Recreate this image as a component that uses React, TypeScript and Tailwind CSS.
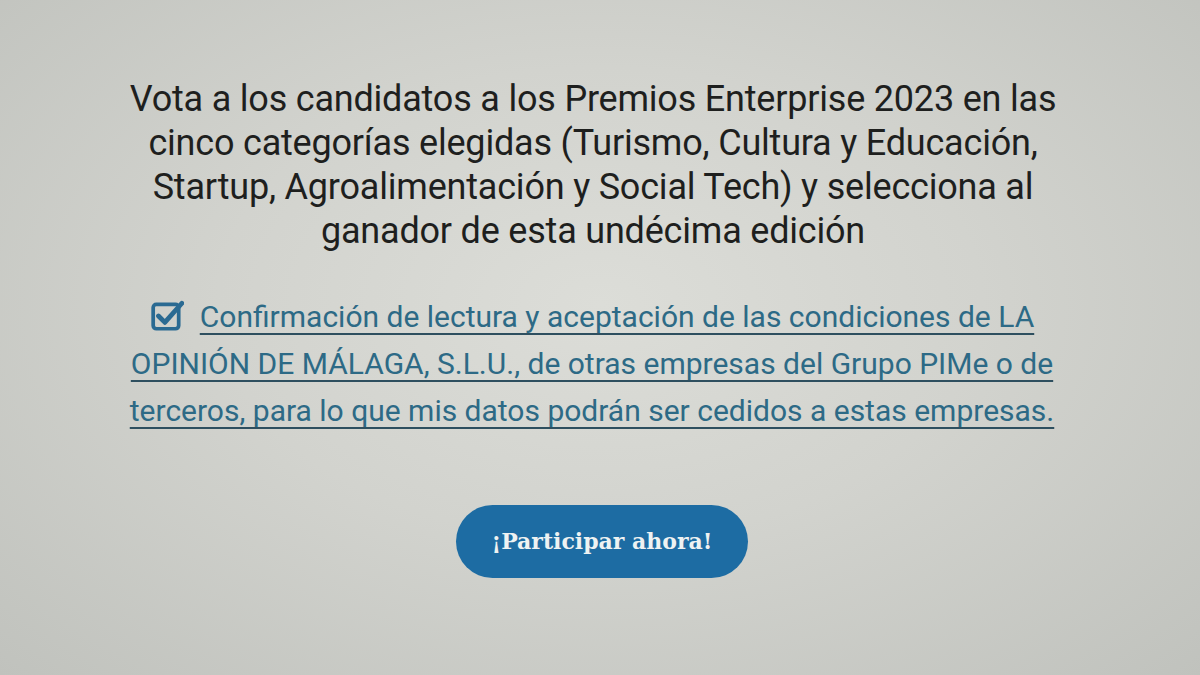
import React from "react";

export default function App() {
  return (
    <div className="w-[1200px] h-[675px] overflow-hidden bg-[radial-gradient(ellipse_at_50%_45%,#dcddd8_0%,#d2d3ce_45%,#c0c2bd_100%)] flex flex-col items-center" style={{ fontFamily: "Roboto, 'Liberation Sans', sans-serif" }}>
      <p className="mt-[77px] ml-[-14px] text-center text-[36px] leading-[44px] text-[#1e1f1e] font-normal tracking-[-0.2px]">
        Vota a los candidatos a los Premios Enterprise 2023 en las<br />
        cinco categorías elegidas (Turismo, Cultura y Educación,<br />
        Startup, Agroalimentación y Social Tech) y selecciona al<br />
        ganador de esta undécima edición
      </p>
      <p className="mt-[40px] ml-[-16px] text-center text-[30px] leading-[47px] text-[#2d6a86]">
        <span className="inline-flex align-middle mr-[16px] -mt-[6px]">
          <svg width="34" height="32" viewBox="0 0 32 30">
            <rect x="3" y="4" width="24" height="23" rx="3" fill="none" stroke="#2a6a92" strokeWidth="3.5" />
            <path d="M8 15 L14 21 L30 3" fill="none" stroke="#2a6a92" strokeWidth="4.5" strokeLinecap="round" strokeLinejoin="round" />
          </svg>
        </span>
        <a className="underline decoration-[#2e4f5f] decoration-2 underline-offset-[6px]">
          Confirmación de lectura y aceptación de las condiciones de LA<br />
          OPINIÓN DE MÁLAGA, S.L.U., de otras empresas del Grupo PIMe o de<br />
          terceros, para lo que mis datos podrán ser cedidos a estas empresas.
        </a>
      </p>
      <button className="mt-[71px] ml-[4px] w-[292px] h-[73px] rounded-full bg-[#1d6ca3] text-[#eef2f2] text-[22px] font-bold" style={{ fontFamily: "'DejaVu Serif', 'Liberation Serif', serif" }}>
        ¡Participar ahora!
      </button>
    </div>
  );
}
